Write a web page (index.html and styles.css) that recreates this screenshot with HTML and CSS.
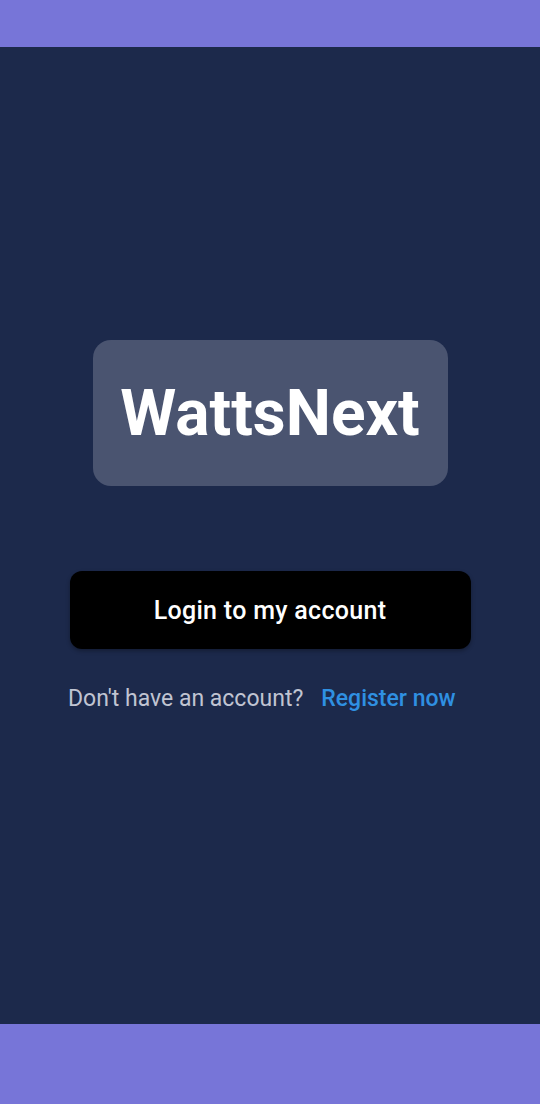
FILE: index.html
```html
<!DOCTYPE html>
<html>
<head>
<meta charset="utf-8">
<link rel="stylesheet" href="styles.css">
</head>
<body>
<div class="screen">
  <div class="topbar"></div>
  <main class="content">
    <div class="logo"><span>WattsNext</span></div>
    <button class="login">Login to my account</button>
    <p class="register"><span class="muted">Don't have an account?</span><a class="link">Register now</a></p>
  </main>
  <div class="bottombar"></div>
</div>
</body>
</html>
```
FILE: styles.css
```css
* { box-sizing: border-box; }
html, body { margin: 0; padding: 0; }
body { font-family: Roboto, "Liberation Sans", sans-serif; background: #1c294b; }
.screen { width: 540px; height: 1104px; display: flex; flex-direction: column; }
.topbar { height: 47px; background: #7775d8; flex: none; }
.bottombar { height: 80px; background: #7775d8; flex: none; }
.content { flex: 1; background: #1c294b; display: flex; flex-direction: column; align-items: center; padding-top: 293px; }
.logo { width: 355px; height: 146px; border-radius: 18px; background: #4a5470; display: flex; align-items: center; justify-content: center; }
.logo span { color: #fff; font-weight: 700; font-size: 64px; }
.login { margin-top: 85px; width: 401px; height: 78px; border: none; border-radius: 12px; background: #000; color: #fff; font-family: Roboto, sans-serif; font-weight: 500; font-size: 25px; letter-spacing: 0.3px; box-shadow: 0 2px 4px rgba(0,0,0,0.3); }
.register { margin: 36px 0 0 0; width: 404px; font-size: 23px; line-height: 27px; display: flex; align-items: baseline; }
.muted { color: #c0c4d2; }
.link { color: #2f90e2; font-weight: 500; margin-left: 18px; }
```
